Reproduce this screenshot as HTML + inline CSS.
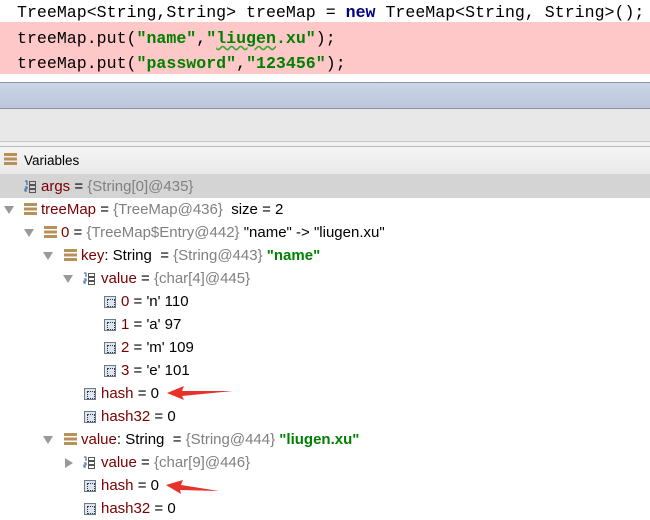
<!DOCTYPE html>
<html><head><meta charset="utf-8"><style>
*{margin:0;padding:0;box-sizing:border-box}
body{width:650px;height:518px;overflow:hidden;background:#fff;position:relative;font-family:"Liberation Sans",sans-serif}
.code{position:absolute;left:17px;font-family:"Liberation Mono",monospace;font-size:16.6px;color:#000;white-space:pre;line-height:20px}
.s{color:#008000;font-weight:bold}
.k{color:#000080;font-weight:bold}
.row{position:absolute;left:0;height:23px;width:650px;font-size:15px;line-height:23px;white-space:pre;color:#000}
.n{color:#7a0000}
.g{color:#808080}
.gs{color:#008000;font-weight:bold}
.tri{position:absolute;top:8px;width:0;height:0;border-left:5px solid transparent;border-right:5px solid transparent;border-top:8px solid #999}
.trr{position:absolute;top:7px;width:0;height:0;border-top:5px solid transparent;border-bottom:5px solid transparent;border-left:8px solid #999}
.obj{position:absolute;top:5px;width:13px;height:12px;background:repeating-linear-gradient(#b8905a 0 3px,transparent 3px 4.5px)}
.arr{position:absolute;top:5px;width:12px;height:13px}
.fld{position:absolute;top:6px;width:12px;height:12px;border:1px solid #6b7a8c;background:#dfe5ec}
.fld:after{content:"";position:absolute;left:2px;top:2px;width:6px;height:6px;border:1px dotted #334}
.t{position:absolute;top:0}
</style></head><body>
<div style="position:absolute;left:0;top:22px;width:650px;height:52px;background:#ffc8c8"></div>
<div class="code" style="top:3px">TreeMap&lt;String,String&gt; treeMap = <span class="k">new</span> TreeMap&lt;String, String&gt;();</div>
<div class="code" style="top:29px">treeMap.put(<span class="s">"name"</span>,<span class="s">"<span style="text-decoration:underline wavy #3a3;text-underline-offset:2px">liugen</span>.xu"</span>);</div>
<div class="code" style="top:54px">treeMap.put(<span class="s">"password"</span>,<span class="s">"123456"</span>);</div>

<div style="position:absolute;left:0;top:82px;width:650px;height:1px;background:#8a93a8"></div>
<div style="position:absolute;left:0;top:83px;width:650px;height:25px;background:linear-gradient(#cbd5e8,#bcc6da)"></div>
<div style="position:absolute;left:0;top:108px;width:650px;height:1px;background:#8a93a8"></div>
<div style="position:absolute;left:0;top:109px;width:650px;height:32px;background:#e8e8e8"></div>
<div style="position:absolute;left:0;top:141px;width:650px;height:1px;background:#c4c4c4"></div>
<div style="position:absolute;left:0;top:142px;width:650px;height:4px;background:#f2f2f2"></div>
<div style="position:absolute;left:0;top:146px;width:650px;height:1px;background:#bdbdbd"></div>
<div style="position:absolute;left:0;top:147px;width:650px;height:27px;background:linear-gradient(#f5f5f5,#e9e9e9)"></div>
<div class="row" style="top:148px"><span class="obj" style="left:4px"></span><span class="t" style="left:24px;font-size:13.5px;top:1px">Variables</span></div>
<div style="position:absolute;left:0;top:174px;width:650px;height:24px;background:#d4d4d4"></div>

<svg width="0" height="0" style="position:absolute"><defs><symbol id="ai" viewBox="0 0 12 13"><path d="M1 1h2v4M1 7h2v2H1v2h2" stroke="#2a5a9a" fill="none" stroke-width="1"/><rect x="5.5" y="1.5" width="6" height="3" fill="none" stroke="#555"/><rect x="5.5" y="5.5" width="6" height="3" fill="none" stroke="#555"/><rect x="5.5" y="9.5" width="6" height="3" fill="none" stroke="#555"/></symbol></defs></svg>

<div class="row" style="top:175px"><svg class="arr" style="left:24px"><use href="#ai"/></svg><span class="t" style="left:41px"><span class="n">args</span> = <span class="g">{String[0]@435}</span></span></div>
<div class="row" style="top:198px"><span class="tri" style="left:4px"></span><span class="obj" style="left:24px"></span><span class="t" style="left:41px"><span class="n">treeMap</span> = <span class="g">{TreeMap@436}</span>  size = 2</span></div>
<div class="row" style="top:221px"><span class="tri" style="left:24px"></span><span class="obj" style="left:44px"></span><span class="t" style="left:61px"><span class="n">0</span> = <span class="g">{TreeMap$Entry@442}</span> "name" -&gt; "liugen.xu"</span></div>
<div class="row" style="top:244px"><span class="tri" style="left:43px"></span><span class="obj" style="left:64px"></span><span class="t" style="left:81px"><span class="n">key</span>: String  = <span class="g">{String@443}</span> <span class="gs">"name"</span></span></div>
<div class="row" style="top:267px"><span class="tri" style="left:63px"></span><svg class="arr" style="left:83px"><use href="#ai"/></svg><span class="t" style="left:101px"><span class="n">value</span> = <span class="g">{char[4]@445}</span></span></div>
<div class="row" style="top:290px"><span class="fld" style="left:104px"></span><span class="t" style="left:121px"><span class="n">0</span> = 'n' 110</span></div>
<div class="row" style="top:313px"><span class="fld" style="left:104px"></span><span class="t" style="left:121px"><span class="n">1</span> = 'a' 97</span></div>
<div class="row" style="top:336px"><span class="fld" style="left:104px"></span><span class="t" style="left:121px"><span class="n">2</span> = 'm' 109</span></div>
<div class="row" style="top:359px"><span class="fld" style="left:104px"></span><span class="t" style="left:121px"><span class="n">3</span> = 'e' 101</span></div>
<div class="row" style="top:382px"><span class="fld" style="left:84px"></span><span class="t" style="left:101px"><span class="n">hash</span> = 0</span></div>
<div class="row" style="top:405px"><span class="fld" style="left:84px"></span><span class="t" style="left:101px"><span class="n">hash32</span> = 0</span></div>
<div class="row" style="top:428px"><span class="tri" style="left:43px"></span><span class="obj" style="left:64px"></span><span class="t" style="left:81px"><span class="n">value</span>: String  = <span class="g">{String@444}</span> <span class="gs">"liugen.xu"</span></span></div>
<div class="row" style="top:451px"><span class="trr" style="left:65px"></span><svg class="arr" style="left:83px"><use href="#ai"/></svg><span class="t" style="left:101px"><span class="n">value</span> = <span class="g">{char[9]@446}</span></span></div>
<div class="row" style="top:474px"><span class="fld" style="left:84px"></span><span class="t" style="left:101px"><span class="n">hash</span> = 0</span></div>
<div class="row" style="top:497px"><span class="fld" style="left:84px"></span><span class="t" style="left:101px"><span class="n">hash32</span> = 0</span></div>

<svg style="position:absolute;left:0;top:0" width="650" height="518">
<path d="M167 393 L184 386 L182 391 L233 391 L182 396 L184 400 Z" fill="#e8312a"/>
<path d="M166 485 L183 480 L181 485 L219 491 L180 490 L181 494 Z" fill="#e8312a"/>
</svg>
</body></html>
